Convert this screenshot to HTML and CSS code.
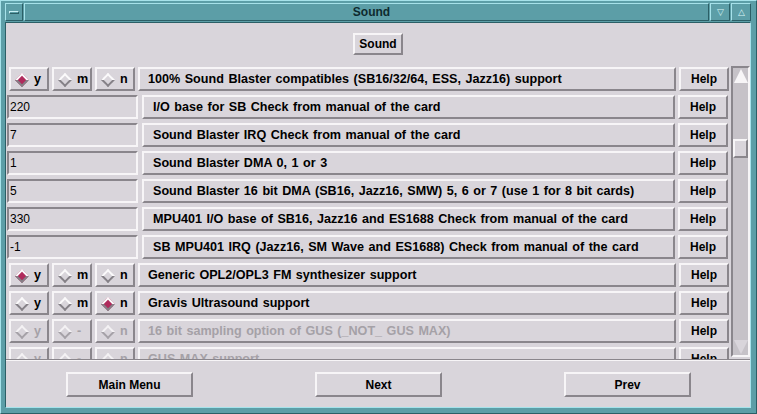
FILE: index.html
```html
<!DOCTYPE html>
<html>
<head>
<meta charset="utf-8">
<link rel="stylesheet" href="styles.css">
</head>
<body>
<div class="frame">
  <div class="titlebar">
    <div class="tb-btn menu"><span class="dash"></span></div>
    <div class="title">Sound</div>
    <div class="tb-btn small">&#9661;</div>
    <div class="tb-btn small">&#9651;</div>
  </div>
  <div class="client">
    <div class="top">
      <div class="btn sound-btn">Sound</div>
    </div>
    <div class="list">
      <div class="rows">
        <div class="row">
          <div class="radio"><span class="dia on"></span><span class="rl">y</span></div>
          <div class="radio"><span class="dia"></span><span class="rl">m</span></div>
          <div class="radio"><span class="dia"></span><span class="rl">n</span></div>
          <div class="label lab-r">100% Sound Blaster compatibles (SB16/32/64, ESS, Jazz16) support</div>
          <div class="help">Help</div>
        </div>
        <div class="row">
          <div class="entry">220</div>
          <div class="label lab-e">I/O base for SB Check from manual of the card</div>
          <div class="help">Help</div>
        </div>
        <div class="row">
          <div class="entry">7</div>
          <div class="label lab-e">Sound Blaster IRQ Check from manual of the card</div>
          <div class="help">Help</div>
        </div>
        <div class="row">
          <div class="entry">1</div>
          <div class="label lab-e">Sound Blaster DMA 0, 1 or 3</div>
          <div class="help">Help</div>
        </div>
        <div class="row">
          <div class="entry">5</div>
          <div class="label lab-e">Sound Blaster 16 bit DMA (SB16, Jazz16, SMW) 5, 6 or 7 (use 1 for 8 bit cards)</div>
          <div class="help">Help</div>
        </div>
        <div class="row">
          <div class="entry">330</div>
          <div class="label lab-e">MPU401 I/O base of SB16, Jazz16 and ES1688 Check from manual of the card</div>
          <div class="help">Help</div>
        </div>
        <div class="row">
          <div class="entry">-1</div>
          <div class="label lab-e">SB MPU401 IRQ (Jazz16, SM Wave and ES1688) Check from manual of the card</div>
          <div class="help">Help</div>
        </div>
        <div class="row">
          <div class="radio"><span class="dia on"></span><span class="rl">y</span></div>
          <div class="radio"><span class="dia"></span><span class="rl">m</span></div>
          <div class="radio"><span class="dia"></span><span class="rl">n</span></div>
          <div class="label lab-r">Generic OPL2/OPL3 FM synthesizer support</div>
          <div class="help">Help</div>
        </div>
        <div class="row">
          <div class="radio"><span class="dia"></span><span class="rl">y</span></div>
          <div class="radio"><span class="dia"></span><span class="rl">m</span></div>
          <div class="radio"><span class="dia on"></span><span class="rl">n</span></div>
          <div class="label lab-r">Gravis Ultrasound support</div>
          <div class="help">Help</div>
        </div>
        <div class="row disabled">
          <div class="radio"><span class="dia"></span><span class="rl">y</span></div>
          <div class="radio"><span class="dia"></span><span class="rl">-</span></div>
          <div class="radio"><span class="dia"></span><span class="rl">n</span></div>
          <div class="label lab-r">16 bit sampling option of GUS (_NOT_ GUS MAX)</div>
          <div class="help">Help</div>
        </div>
        <div class="row disabled">
          <div class="radio"><span class="dia"></span><span class="rl">y</span></div>
          <div class="radio"><span class="dia"></span><span class="rl">-</span></div>
          <div class="radio"><span class="dia"></span><span class="rl">n</span></div>
          <div class="label lab-r">GUS MAX support</div>
          <div class="help">Help</div>
        </div>
      </div>
      <div class="scrollbar">
        <div class="arrow up"></div>
        <div class="trough-fill"><div class="thumb"></div></div>
        <div class="arrow down"></div>
      </div>
    </div>
    <div class="bottom">
      <div class="btn big">Main Menu</div>
      <div class="btn big">Next</div>
      <div class="btn big">Prev</div>
    </div>
  </div>
</div>
</body>
</html>
```
FILE: styles.css
```css
* { box-sizing: border-box; }
html, body { margin: 0; padding: 0; }
body {
  background: #5c9ea7;
  font-family: "Liberation Sans", Arial, sans-serif;
  font-size: 12px;
  color: #000;
}
.frame {
  width: 757px;
  height: 414px;
  background: #5c9ea7;
  border-top: 1px solid #a6e2ea;
  border-left: 1px solid #a6e2ea;
  border-right: 1px solid #2b5f66;
  border-bottom: 1px solid #2b5f66;
  padding: 0 5px 5px 4px;
  display: flex;
  flex-direction: column;
}
.titlebar {
  height: 21px;
  display: flex;
  padding-top: 2px;
  padding-bottom: 1px;
}
.tb-btn {
  border-top: 1px solid #a6e2ea;
  border-left: 1px solid #a6e2ea;
  border-right: 1px solid #2b5f66;
  border-bottom: 1px solid #2b5f66;
  display: flex;
  align-items: center;
  justify-content: center;
  color: #d8f4f6;
  font-size: 9px;
}
.menu { width: 18px; }
.dash {
  width: 10px;
  height: 3px;
  border-top: 1px solid #c8f0f4;
  border-left: 1px solid #c8f0f4;
  border-right: 1px solid #2b5f66;
  border-bottom: 1px solid #2b5f66;
}
.small { width: 20px; margin-left: 1px; }
.title {
  flex: 1;
  border-top: 1px solid #a6e2ea;
  border-left: 1px solid #a6e2ea;
  border-right: 1px solid #2b5f66;
  border-bottom: 1px solid #2b5f66;
  margin-left: 1px;
  text-align: center;
  font-weight: bold;
  font-size: 12px;
  line-height: 16px;
  color: #0e2a2e;
  padding-left: 10px;
}
.client {
  width: 746px;
  height: 386px;
  background: #d9d5db;
  border-left: 1px solid #2b5f66;
  border-top: 1px solid #2b5f66;
  border-right: 1px solid #a6e2ea;
  border-bottom: 1px solid #a6e2ea;
  display: flex;
  flex-direction: column;
}
.top {
  height: 41px;
  display: flex;
  justify-content: center;
  padding-top: 10px;
}
.btn {
  border-top: 2px solid #f7f5f7;
  border-left: 2px solid #f7f5f7;
  border-right: 2px solid #8a868c;
  border-bottom: 2px solid #8a868c;
  font-weight: bold;
  display: flex;
  align-items: center;
  justify-content: center;
}
.sound-btn { width: 50px; height: 22px; }
.list {
  height: 296px;
  display: flex;
  border-bottom: 1px solid #8a868c;
}
.rows {
  width: 725px;
  overflow: hidden;
  padding: 3px 0 0 1px;
  display: flex;
  flex-direction: column;
  gap: 4px;
}
.row {
  display: flex;
  height: 24px;
  flex: none;
  align-items: stretch;
}
.radio {
  width: 40px;
  margin-left: 2px;
  margin-right: 1px;
  border-top: 2px solid #f7f5f7;
  border-left: 2px solid #f7f5f7;
  border-right: 2px solid #8a868c;
  border-bottom: 2px solid #8a868c;
  display: flex;
  align-items: center;
  padding-left: 6px;
  font-weight: bold;
}
.radio + .radio { margin-left: 2px; }
.dia {
  width: 10px;
  height: 10px;
  transform: rotate(45deg);
  border-top: 2px solid #fbfafb;
  border-left: 2px solid #fbfafb;
  border-right: 2px solid #858187;
  border-bottom: 2px solid #858187;
  margin-right: 7px;
  margin-top: 1px;
}
.dia.on { background: #b02a5c; }
.rl { font-size: 12.6px; }
.label {
  border-top: 2px solid #f7f5f7;
  border-left: 2px solid #f7f5f7;
  border-right: 2px solid #8a868c;
  border-bottom: 2px solid #8a868c;
  display: flex;
  align-items: center;
  font-weight: bold;
  font-size: 12.6px;
  word-spacing: 1px;
  white-space: nowrap;
  overflow: hidden;
}
.lab-r { width: 538px; margin-left: 2px; padding-left: 8px; }
.lab-e { width: 533px; margin-left: 4px; padding-left: 9px; }
.entry {
  width: 131px;
  border-top: 2px solid #8a868c;
  border-left: 2px solid #8a868c;
  border-right: 2px solid #f7f5f7;
  border-bottom: 2px solid #f7f5f7;
  display: flex;
  align-items: center;
  padding-left: 1px;
  font-weight: normal;
}
.help {
  width: 50px;
  margin-left: 3px;
  border-top: 2px solid #f7f5f7;
  border-left: 2px solid #f7f5f7;
  border-right: 2px solid #8a868c;
  border-bottom: 2px solid #8a868c;
  display: flex;
  align-items: center;
  justify-content: center;
  font-weight: bold;
}
.disabled .rl, .disabled .label { color: #a5a1a7; }
.disabled .dia {
  border-top-color: #f4f2f4;
  border-left-color: #f4f2f4;
  border-right-color: #a5a1a7;
  border-bottom-color: #a5a1a7;
}
.scrollbar {
  width: 19px;
  margin-left: 2px;
  margin-top: 2px;
  height: 291px;
  background: #c6c2c8;
  border-top: 2px solid #8a868c;
  border-left: 2px solid #8a868c;
  border-right: 2px solid #f7f5f7;
  border-bottom: 2px solid #f7f5f7;
  display: flex;
  flex-direction: column;
}
.arrow {
  width: 0;
  height: 0;
  margin: 1px auto;
  flex: none;
}
.arrow.up {
  border-left: 7px solid transparent;
  border-right: 7px solid transparent;
  border-bottom: 14px solid #f7f5f7;
}
.arrow.down {
  border-left: 7px solid transparent;
  border-right: 7px solid transparent;
  border-top: 14px solid #d9d5db;
}
.trough-fill {
  flex: 1;
  padding-top: 55px;
}
.thumb {
  height: 19px;
  background: #d9d5db;
  border-top: 2px solid #f7f5f7;
  border-left: 2px solid #f7f5f7;
  border-right: 2px solid #8a868c;
  border-bottom: 2px solid #8a868c;
}
.bottom {
  flex: 1;
  border-top: 1px solid #f7f5f7;
  display: flex;
  align-items: flex-start;
  padding: 11px 0 0 60px;
  gap: 122px;
}
.big { width: 127px; height: 25px; }
```
